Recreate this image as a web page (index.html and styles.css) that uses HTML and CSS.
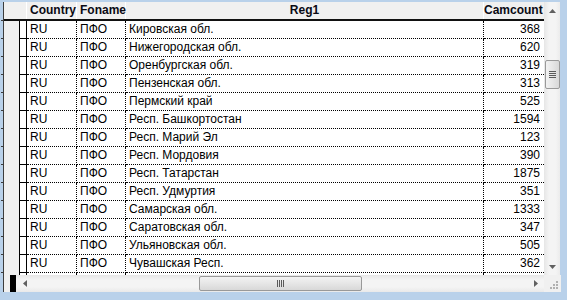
FILE: index.html
```html
<!DOCTYPE html>
<html>
<head>
<meta charset="utf-8">
<link rel="stylesheet" href="styles.css">
</head>
<body>
<div class="window">
  <div class="client">
    <div class="main">
      <div class="grid">
        <div class="row head">
          <div class="ind-head"></div>
          <div class="cell h c-country">Country</div>
          <div class="cell h c-foname">Foname</div>
          <div class="cell h c-reg center">Reg1</div>
          <div class="cell h c-cam right">Camcount</div>
        </div>
        <div class="row"><div class="ind1"></div><div class="ind2"></div><div class="cell c-country">RU</div><div class="cell c-foname">ПФО</div><div class="cell c-reg">Кировская обл.</div><div class="cell c-cam right">368</div></div>
        <div class="row"><div class="ind1"></div><div class="ind2"></div><div class="cell c-country">RU</div><div class="cell c-foname">ПФО</div><div class="cell c-reg">Нижегородская обл.</div><div class="cell c-cam right">620</div></div>
        <div class="row"><div class="ind1"></div><div class="ind2"></div><div class="cell c-country">RU</div><div class="cell c-foname">ПФО</div><div class="cell c-reg">Оренбургская обл.</div><div class="cell c-cam right">319</div></div>
        <div class="row"><div class="ind1"></div><div class="ind2"></div><div class="cell c-country">RU</div><div class="cell c-foname">ПФО</div><div class="cell c-reg">Пензенская обл.</div><div class="cell c-cam right">313</div></div>
        <div class="row"><div class="ind1"></div><div class="ind2"></div><div class="cell c-country">RU</div><div class="cell c-foname">ПФО</div><div class="cell c-reg">Пермский край</div><div class="cell c-cam right">525</div></div>
        <div class="row"><div class="ind1"></div><div class="ind2"></div><div class="cell c-country">RU</div><div class="cell c-foname">ПФО</div><div class="cell c-reg">Респ. Башкортостан</div><div class="cell c-cam right">1594</div></div>
        <div class="row"><div class="ind1"></div><div class="ind2"></div><div class="cell c-country">RU</div><div class="cell c-foname">ПФО</div><div class="cell c-reg">Респ. Марий Эл</div><div class="cell c-cam right">123</div></div>
        <div class="row"><div class="ind1"></div><div class="ind2"></div><div class="cell c-country">RU</div><div class="cell c-foname">ПФО</div><div class="cell c-reg">Респ. Мордовия</div><div class="cell c-cam right">390</div></div>
        <div class="row"><div class="ind1"></div><div class="ind2"></div><div class="cell c-country">RU</div><div class="cell c-foname">ПФО</div><div class="cell c-reg">Респ. Татарстан</div><div class="cell c-cam right">1875</div></div>
        <div class="row"><div class="ind1"></div><div class="ind2"></div><div class="cell c-country">RU</div><div class="cell c-foname">ПФО</div><div class="cell c-reg">Респ. Удмуртия</div><div class="cell c-cam right">351</div></div>
        <div class="row"><div class="ind1"></div><div class="ind2"></div><div class="cell c-country">RU</div><div class="cell c-foname">ПФО</div><div class="cell c-reg">Самарская обл.</div><div class="cell c-cam right">1333</div></div>
        <div class="row"><div class="ind1"></div><div class="ind2"></div><div class="cell c-country">RU</div><div class="cell c-foname">ПФО</div><div class="cell c-reg">Саратовская обл.</div><div class="cell c-cam right">347</div></div>
        <div class="row"><div class="ind1"></div><div class="ind2"></div><div class="cell c-country">RU</div><div class="cell c-foname">ПФО</div><div class="cell c-reg">Ульяновская обл.</div><div class="cell c-cam right">505</div></div>
        <div class="row"><div class="ind1"></div><div class="ind2"></div><div class="cell c-country">RU</div><div class="cell c-foname">ПФО</div><div class="cell c-reg">Чувашская Респ.</div><div class="cell c-cam right">362</div></div>
        <div class="row"><div class="ind1"></div><div class="ind2"></div><div class="cell c-country"></div><div class="cell c-foname"></div><div class="cell c-reg"></div><div class="cell c-cam right"></div></div>
      </div>
      <div class="vscroll">
        <div class="arrow-box">
          <svg width="7" height="4" viewBox="0 0 7 4"><path d="M0 4 L3.5 0 L7 4 Z" fill="#606060"/></svg>
        </div>
        <div class="vtrack-top"></div>
        <div class="vthumb">
          <span></span><span></span><span></span><span></span>
        </div>
        <div class="vtrack-rest"></div>
        <div class="arrow-box">
          <svg width="7" height="4" viewBox="0 0 7 4"><path d="M0 0 L3.5 4 L7 0 Z" fill="#606060"/></svg>
        </div>
      </div>
    </div>
    <div class="hbar">
      <div class="hpad"></div>
      <div class="hblack"></div>
      <div class="hscroll">
        <div class="harrow">
          <svg width="4" height="7" viewBox="0 0 4 7"><path d="M4 0 L0 3.5 L4 7 Z" fill="#606060"/></svg>
        </div>
        <div class="htrack-left"></div>
        <div class="hthumb">
          <span></span><span></span><span></span><span></span>
        </div>
        <div class="htrack-rest"></div>
        <div class="harrow">
          <svg width="4" height="7" viewBox="0 0 4 7"><path d="M0 0 L4 3.5 L0 7 Z" fill="#606060"/></svg>
        </div>
      </div>
      <div class="corner">
        <svg width="17" height="17" viewBox="0 0 17 17">
          <g fill="#b0b0b0">
            <rect x="12" y="6" width="2" height="2"/>
            <rect x="9" y="9" width="2" height="2"/><rect x="12" y="9" width="2" height="2"/>
            <rect x="6" y="12" width="2" height="2"/><rect x="9" y="12" width="2" height="2"/><rect x="12" y="12" width="2" height="2"/>
          </g>
        </svg>
      </div>
    </div>
  </div>
</div>
</body>
</html>
```

FILE: styles.css
```css
* { box-sizing: border-box; }
html, body { margin: 0; padding: 0; }
body {
  width: 567px;
  height: 300px;
  overflow: hidden;
  font-family: "Liberation Sans", Arial, sans-serif;
  font-size: 12px;
  background: #b9d1ea;
}
.window {
  width: 567px;
  height: 300px;
  padding: 2px 7px 8px 3px;
  background:
    repeating-linear-gradient(to bottom, transparent 0, transparent 17px, #3c3c3c 17px, #3c3c3c 18px) 1px 3px / 2px 271px no-repeat,
    #b9d1ea;
}
.client {
  width: 557px;
  height: 290px;
  display: flex;
  flex-direction: column;
  border-left: 1px solid #3c3c3c;
  background: #fff;
}
.main {
  display: flex;
  height: 273px;
  flex: none;
  overflow: hidden;
}
.grid {
  width: 540px;
  flex: none;
  overflow: hidden;
  background: #fff;
}
.row {
  display: flex;
  height: 18px;
}
.row.head {
  height: 19px;
  background: #f0f0f0;
  border-bottom: 2px solid #111;
}
.ind-head {
  width: 23px;
  border-right: 1px solid #fff;
  flex: none;
}
.ind1 {
  width: 16px;
  flex: none;
  background: #f0f0f0;
  border-right: 1px solid #000;
}
.ind2 {
  width: 7px;
  flex: none;
  background: #fff;
  border-right: 1px solid #000;
  border-bottom: 1px solid #000;
}
.cell {
  flex: none;
  padding: 0 3px;
  line-height: 17px;
  white-space: nowrap;
  overflow: hidden;
  color: #000;
  border-right: 1px dotted #000;
  border-bottom: 1px dotted #000;
}
.cell.h {
  font-weight: bold;
  color: #0a0a14;
  border-right: 1px solid #fff;
  border-bottom: none;
  line-height: 17px;
  overflow: visible;
}
.c-country { width: 50px; }
.c-foname { width: 49px; }
.c-reg { width: 358px; }
.c-cam { width: 60px; padding: 0 4px 0 0; border-right: none !important; }
.center { text-align: center; }
.right { text-align: right; }

.vscroll {
  width: 17px;
  flex: none;
  display: flex;
  flex-direction: column;
  background: linear-gradient(to right, #e6e6e6, #f4f4f4 30%, #f4f4f4 70%, #e9e9e9);
}
.arrow-box {
  height: 17px;
  flex: none;
  display: flex;
  align-items: center;
  justify-content: center;
}
.vtrack-top { height: 41px; flex: none; }
.vthumb {
  height: 29px;
  margin: 0 1px;
  flex: none;
  border: 1px solid #999;
  border-radius: 2px;
  background: linear-gradient(to right, #f2f2f2, #e6e6e6 50%, #d8d8d8);
  display: flex;
  flex-direction: column;
  align-items: center;
  justify-content: center;
  gap: 1px;
}
.vthumb span {
  display: block;
  width: 7px;
  height: 1px;
  background: #5a5a5a;
}
.vtrack-rest { flex: 1; }

.hbar {
  display: flex;
  height: 17px;
  flex: none;
  background: #f0f0f0;
}
.hpad { width: 6px; flex: none; background: #f0f0f0; }
.hblack { width: 6px; flex: none; background: #000; }
.hscroll {
  width: 528px;
  flex: none;
  display: flex;
  background: linear-gradient(to bottom, #e6e6e6, #f4f4f4 30%, #f4f4f4 70%, #e9e9e9);
}
.harrow {
  width: 17px;
  flex: none;
  display: flex;
  align-items: center;
  justify-content: center;
}
.htrack-left { width: 166px; flex: none; }
.hthumb {
  width: 163px;
  flex: none;
  margin: 1px 0;
  border: 1px solid #999;
  border-radius: 2px;
  background: linear-gradient(to bottom, #f2f2f2, #e6e6e6 50%, #d8d8d8);
  display: flex;
  align-items: center;
  justify-content: center;
  gap: 1px;
}
.hthumb span {
  display: block;
  width: 1px;
  height: 7px;
  background: #5a5a5a;
}
.htrack-rest { flex: 1; }
.corner {
  width: 17px;
  flex: none;
  background: #f0f0f0;
}
.corner svg { display: block; }
```
